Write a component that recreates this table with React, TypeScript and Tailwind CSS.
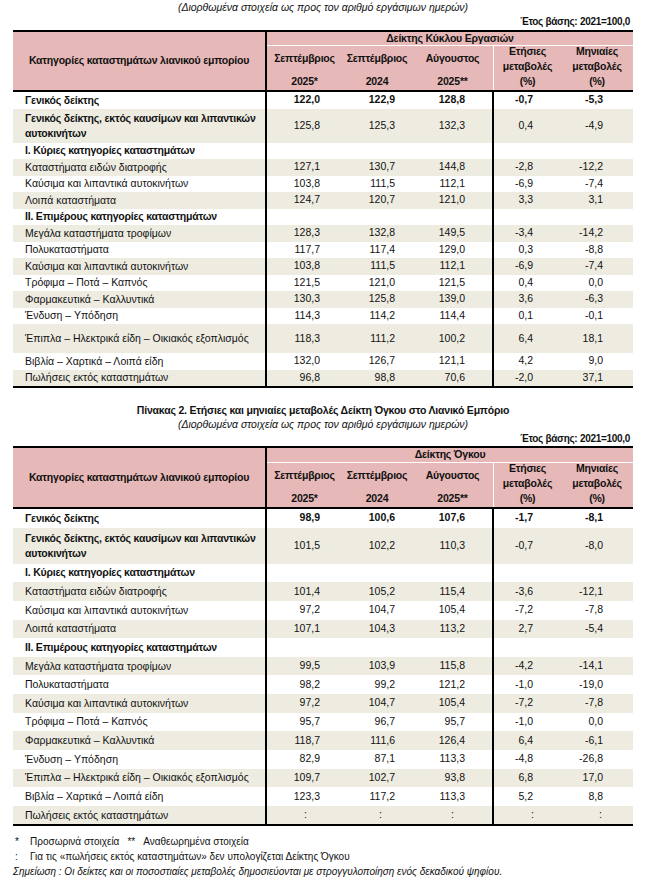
import React from "react";

type Row = {
  label: React.ReactNode;
  values?: string[];
  bold?: boolean;
  boldValues?: boolean;
  tall?: "two" | "wide";
};

const PINK = "bg-[#e6b8b7]";

const table1: Row[] = [
  { label: "Γενικός δείκτης", values: ["122,0", "122,9", "128,8", "-0,7", "-5,3"], bold: true, boldValues: true },
  { label: <>Γενικός δείκτης, εκτός καυσίμων και λιπαντικών<br />αυτοκινήτων</>, values: ["125,8", "125,3", "132,3", "0,4", "-4,9"], bold: true, tall: "two" },
  { label: "I. Κύριες κατηγορίες καταστημάτων", bold: true },
  { label: "Καταστήματα ειδών διατροφής", values: ["127,1", "130,7", "144,8", "-2,8", "-12,2"] },
  { label: "Καύσιμα και λιπαντικά αυτοκινήτων", values: ["103,8", "111,5", "112,1", "-6,9", "-7,4"] },
  { label: "Λοιπά καταστήματα", values: ["124,7", "120,7", "121,0", "3,3", "3,1"] },
  { label: "II. Επιμέρους κατηγορίες καταστημάτων", bold: true },
  { label: "Μεγάλα καταστήματα τροφίμων", values: ["128,3", "132,8", "149,5", "-3,4", "-14,2"] },
  { label: "Πολυκαταστήματα", values: ["117,7", "117,4", "129,0", "0,3", "-8,8"] },
  { label: "Καύσιμα και λιπαντικά αυτοκινήτων", values: ["103,8", "111,5", "112,1", "-6,9", "-7,4"] },
  { label: "Τρόφιμα – Ποτά – Καπνός", values: ["121,5", "121,0", "121,5", "0,4", "0,0"] },
  { label: "Φαρμακευτικά – Καλλυντικά", values: ["130,3", "125,8", "139,0", "3,6", "-6,3"] },
  { label: "Ένδυση – Υπόδηση", values: ["114,3", "114,2", "114,4", "0,1", "-0,1"] },
  { label: "Έπιπλα – Ηλεκτρικά είδη – Οικιακός εξοπλισμός", values: ["118,3", "111,2", "100,2", "6,4", "18,1"], tall: "wide" },
  { label: "Βιβλία – Χαρτικά – Λοιπά είδη", values: ["132,0", "126,7", "121,1", "4,2", "9,0"] },
  { label: "Πωλήσεις εκτός καταστημάτων", values: ["96,8", "98,8", "70,6", "-2,0", "37,1"] },
];

const table2: Row[] = [
  { label: "Γενικός δείκτης", values: ["98,9", "100,6", "107,6", "-1,7", "-8,1"], bold: true, boldValues: true },
  { label: <>Γενικός δείκτης, εκτός καυσίμων και λιπαντικών<br />αυτοκινήτων</>, values: ["101,5", "102,2", "110,3", "-0,7", "-8,0"], bold: true, tall: "two" },
  { label: "I. Κύριες κατηγορίες καταστημάτων", bold: true },
  { label: "Καταστήματα ειδών διατροφής", values: ["101,4", "105,2", "115,4", "-3,6", "-12,1"] },
  { label: "Καύσιμα και λιπαντικά αυτοκινήτων", values: ["97,2", "104,7", "105,4", "-7,2", "-7,8"] },
  { label: "Λοιπά καταστήματα", values: ["107,1", "104,3", "113,2", "2,7", "-5,4"] },
  { label: "II. Επιμέρους κατηγορίες καταστημάτων", bold: true },
  { label: "Μεγάλα καταστήματα τροφίμων", values: ["99,5", "103,9", "115,8", "-4,2", "-14,1"] },
  { label: "Πολυκαταστήματα", values: ["98,2", "99,2", "121,2", "-1,0", "-19,0"] },
  { label: "Καύσιμα και λιπαντικά αυτοκινήτων", values: ["97,2", "104,7", "105,4", "-7,2", "-7,8"] },
  { label: "Τρόφιμα – Ποτά – Καπνός", values: ["95,7", "96,7", "95,7", "-1,0", "0,0"] },
  { label: "Φαρμακευτικά – Καλλυντικά", values: ["118,7", "111,6", "126,4", "6,4", "-6,1"] },
  { label: "Ένδυση – Υπόδηση", values: ["82,9", "87,1", "113,3", "-4,8", "-26,8"] },
  { label: "Έπιπλα – Ηλεκτρικά είδη – Οικιακός εξοπλισμός", values: ["109,7", "102,7", "93,8", "6,8", "17,0"] },
  { label: "Βιβλία – Χαρτικά – Λοιπά είδη", values: ["123,3", "117,2", "113,3", "5,2", "8,8"] },
  { label: "Πωλήσεις εκτός καταστημάτων", values: [":", ":", ":", ":", ":"] },
];

const GRID = "grid grid-cols-[254px_75px_70px_82px_67px_72px]";
const valuePad = ["pr-[22px]", "pr-[17px]", "pr-[27px] border-r-2 border-black", "pr-[28px]", "pr-[30px]"];
const colonPad = ["pr-[35px]", "pr-[30px]", "pr-[38px] border-r-2 border-black", "pr-[27px]", "pr-[31px]"];

function Header({ indexLabel, topH }: { indexLabel: string; topH: string }) {
  return (
    <div className={`${GRID} ${PINK} border-y-2 border-black font-bold tracking-[-0.2px]`}>
      <div className="row-span-2 flex items-center justify-center border-r-2 border-black whitespace-nowrap">
        Κατηγορίες καταστημάτων λιανικού εμπορίου
      </div>
      <div className={`col-span-5 ${topH} flex items-center justify-center border-b border-white`}>{indexLabel}</div>
      <div className="h-[44px] flex flex-col items-center justify-between pt-[5px] pb-[1px] leading-[15px]">
        <span>Σεπτέμβριος</span>
        <span>2025*</span>
      </div>
      <div className="h-[44px] flex flex-col items-center justify-between pt-[5px] pb-[1px] leading-[15px]">
        <span>Σεπτέμβριος</span>
        <span>2024</span>
      </div>
      <div className="h-[44px] flex flex-col items-center justify-between pt-[5px] pb-[1px] leading-[15px] border-r border-white">
        <span>Αύγουστος</span>
        <span>2025**</span>
      </div>
      <div className="h-[44px] flex flex-col items-center justify-end pb-[1px] leading-[15px]">
        <span>Ετήσιες</span>
        <span>μεταβολές</span>
        <span>(%)</span>
      </div>
      <div className="h-[44px] flex flex-col items-center justify-end pb-[1px] leading-[15px]">
        <span>Μηνιαίες</span>
        <span>μεταβολές</span>
        <span>(%)</span>
      </div>
    </div>
  );
}

function Body({ rows, rowH, twoH, wideH }: { rows: Row[]; rowH: string; twoH: string; wideH: string }) {
  return (
    <div className="border-b-2 border-black">
      {rows.map((r, i) => {
        const h = r.tall === "two" ? twoH : r.tall === "wide" ? wideH : rowH;
        const shaded = i % 2 === 1 ? "bg-[#eeece1]" : "bg-white";
        return (
          <div key={i} className={`${GRID} ${h} ${shaded}`}>
            <div
              className={`flex items-center pl-3 border-r-2 border-black whitespace-nowrap leading-[15px] ${
                r.bold ? "font-bold tracking-[-0.2px]" : ""
              }`}
            >
              <span>{r.label}</span>
            </div>
            {[0, 1, 2, 3, 4].map((c) => {
              const v = r.values ? r.values[c] : "";
              const pad = v === ":" ? colonPad[c] : valuePad[c];
              return (
                <div key={c} className={`flex items-center justify-end ${pad} ${r.boldValues ? "font-bold" : ""}`}>
                  {v}
                </div>
              );
            })}
          </div>
        );
      })}
    </div>
  );
}

export default function App() {
  return (
    <div className="w-[658px] h-[884px] overflow-hidden bg-white text-[10.5px] text-[#111] font-['Liberation_Sans',Arial,sans-serif]">
      <div className="w-[620px] ml-[13px]">
        <p className="h-[14px] leading-[14px] text-center italic text-[10.5px]">
          (Διορθωμένα στοιχεία ως προς τον αριθμό εργάσιμων ημερών)
        </p>
        <p className="h-[16px] leading-[16px] text-right pr-[3px] font-bold text-[10px] tracking-[-0.3px]">Έτος βάσης: 2021=100,0</p>
        <Header indexLabel="Δείκτης Κύκλου Εργασιών" topH="h-[14px]" />
        <Body rows={table1} rowH="h-[16.5px]" twoH="h-[34px]" wideH="h-[29px]" />

        <p className="mt-[15px] h-[15px] leading-[15px] text-center font-bold tracking-[-0.2px]">
          Πίνακας 2. Ετήσιες και μηνιαίες μεταβολές Δείκτη Όγκου στο Λιανικό Εμπόριο
        </p>
        <p className="h-[13px] leading-[13px] text-center italic text-[10.5px]">
          (Διορθωμένα στοιχεία ως προς τον αριθμό εργάσιμων ημερών)
        </p>
        <p className="h-[15px] leading-[15px] text-right pr-[3px] font-bold text-[10px] tracking-[-0.3px]">Έτος βάσης: 2021=100,0</p>
        <Header indexLabel="Δείκτης Όγκου" topH="h-[15px]" />
        <Body rows={table2} rowH="h-[18.64px]" twoH="h-[36px]" wideH="h-[18.64px]" />

        <div className="mt-[8px] text-[10px] leading-[15px]">
          <div className="flex">
            <span className="w-[17px] pl-[2px]">*</span>
            <span>Προσωρινά στοιχεία</span>
            <span className="ml-[8px] mr-[8px]">**</span>
            <span>Αναθεωρημένα στοιχεία</span>
          </div>
          <div className="flex">
            <span className="w-[17px] pl-[2px]">:</span>
            <span>Για τις «πωλήσεις εκτός καταστημάτων» δεν υπολογίζεται Δείκτης Όγκου</span>
          </div>
          <p className="italic">
            Σημείωση : Οι δείκτες και οι ποσοστιαίες μεταβολές δημοσιεύονται με στρογγυλοποίηση ενός δεκαδικού ψηφίου.
          </p>
        </div>
      </div>
    </div>
  );
}
